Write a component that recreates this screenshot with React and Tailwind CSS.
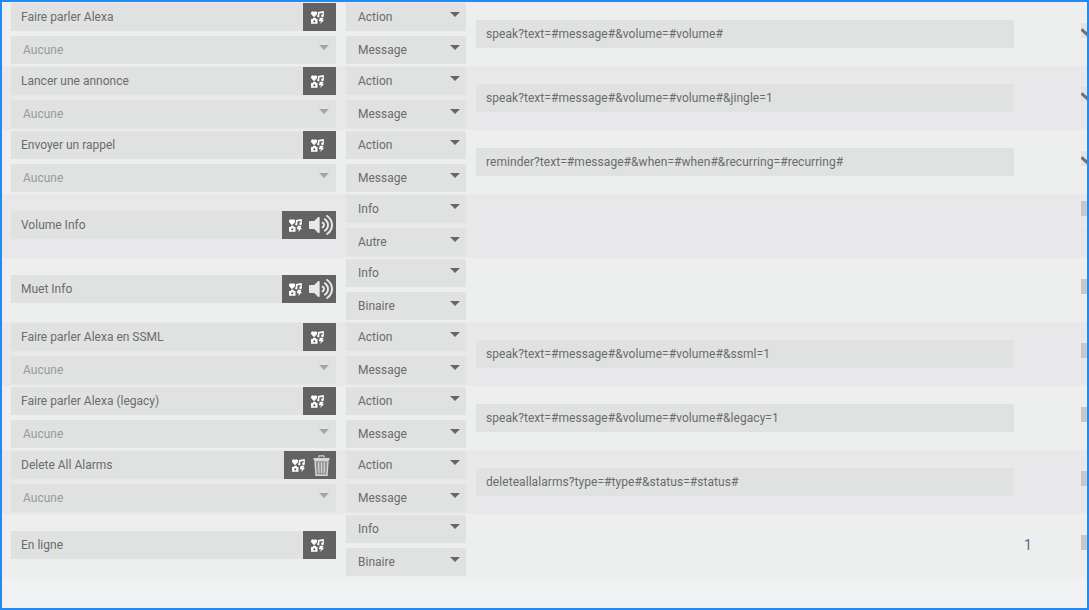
import { FaVolumeUp } from 'react-icons/fa'

const rows = [
  { name: 'Faire parler Alexa', type: 'Action', sub: 'Message', url: 'speak?text=#message#&volume=#volume#', side: 'chevron' },
  { name: 'Lancer une annonce', type: 'Action', sub: 'Message', url: 'speak?text=#message#&volume=#volume#&jingle=1', side: 'chevron' },
  { name: 'Envoyer un rappel', type: 'Action', sub: 'Message', url: 'reminder?text=#message#&when=#when#&recurring=#recurring#', side: 'chevron' },
  { name: 'Volume Info', type: 'Info', sub: 'Autre', icon: 'volume', side: 'double' },
  { name: 'Muet Info', type: 'Info', sub: 'Binaire', icon: 'volume' },
  { name: 'Faire parler Alexa en SSML', type: 'Action', sub: 'Message', url: 'speak?text=#message#&volume=#volume#&ssml=1' },
  { name: 'Faire parler Alexa (legacy)', type: 'Action', sub: 'Message', url: 'speak?text=#message#&volume=#volume#&legacy=1' },
  { name: 'Delete All Alarms', type: 'Action', sub: 'Message', url: 'deleteallalarms?type=#type#&status=#status#', icon: 'trash' },
  { name: 'En ligne', type: 'Info', sub: 'Binaire', value: '1' },
]

function TilesIcon() {
  return (
    <svg viewBox="0 0 14 14" className="w-[13px] h-[13px]" fill="#fff">
      <path d="M3.3 6.6 L0.2 3.4 C-0.7 1.2 1.8 -0.8 3.3 1 C4.8 -0.8 7.3 1.2 6.4 3.4 Z" />
      <path d="M7.4 1 L13.8 0 L13.8 5.4 C13.5 6.8 10.8 6.6 11 5 C11.1 4.2 11.8 3.9 12.4 3.9 L12.4 2.2 L9 2.7 L9 5.8 C8.7 7.2 6.4 7 6.6 5.4 C6.7 4.8 7 4.4 7.4 4.3 Z" />
      <path d="M0 8.6 L1.8 8.6 L2.4 7.4 L5 7.4 L5.6 8.6 L7 8.6 L7 13.8 L0 13.8 Z M3.5 9.9 A1.2 1.2 0 1 0 3.51 9.9 Z" fillRule="evenodd" />
      <path d="M9.4 7.4 L13.6 7.4 L12.2 9.6 L14 9.6 L10 14 L10.8 11 L8.4 11 Z" />
    </svg>
  )
}

function TrashIcon() {
  return (
    <svg viewBox="0 0 17 21" className="w-[17px] h-[21px]" fill="none">
      <path d="M5.5 2.5 L6.2 0.8 L10.8 0.8 L11.5 2.5" stroke="#d4d6d8" strokeWidth="1.2" />
      <path d="M0.5 3 L16.5 3 L16.5 5 L0.5 5 Z" fill="#d4d6d8" />
      <path d="M2 5.5 L3 20.2 L14 20.2 L15 5.5 Z" fill="#8f9496" stroke="#d4d6d8" strokeWidth="1.4" />
      <path d="M5.6 7.5 L5.9 18 M8.5 7.5 L8.5 18 M11.4 7.5 L11.1 18" stroke="#d4d6d8" strokeWidth="1.2" />
    </svg>
  )
}

function Select({ label, light }) {
  return (
    <div className={`relative h-[28px] flex items-center bg-[#e0e2e1] pl-[12px] ${light ? 'text-[#9a9a9a]' : 'text-[#6b6b6b]'}`}>
      {label}
      <span className={`absolute top-[9px] w-0 h-0 border-x-[5px] border-x-transparent border-t-[5px] ${light ? 'right-[7px] border-t-[#a3a5a5]' : 'right-[6px] border-t-[#666666]'}`} />
    </div>
  )
}

function NameField({ name, icon }) {
  return (
    <div className="flex h-[28px] bg-[#e0e2e1]">
      <div className="flex-1 pl-[10px] flex items-center text-[#6b6b6b]">{name}</div>
      {!icon && (
        <div className="flex items-center w-[33px] h-full pl-[8px] bg-[#636363]">
          <TilesIcon />
        </div>
      )}
      {icon === 'volume' && (
        <div className="flex items-center w-[54px] h-full pl-[7px] gap-[7px] bg-[#636363]">
          <TilesIcon />
          <FaVolumeUp className="text-[#e6e8ea] text-[24px]" />
        </div>
      )}
      {icon === 'trash' && (
        <div className="flex items-center w-[52px] h-full pl-[8px] gap-[8px] bg-[#636363]">
          <TilesIcon />
          <TrashIcon />
        </div>
      )}
    </div>
  )
}

function SideControl({ side }) {
  if (side === 'chevron') {
    return (
      <div className="mt-[21px] relative h-[15px] bg-[#e0e2e1] overflow-hidden">
        <span className="absolute left-[-1px] top-[8px] w-[10px] h-[3px] rotate-[40deg] bg-[#7a6a5f]" />
      </div>
    )
  }
  if (side === 'double') {
    return (
      <div className="mt-[7px] flex flex-col gap-[12px]">
        <div className="h-[15px] bg-[#c8c8c8]" />
        <div className="h-[28px] bg-[#e6e6e8]" />
      </div>
    )
  }
  return <div className="mt-[21px] h-[15px] bg-[#c8c8c8]" />
}

function Row({ row, index }) {
  const hasAction = row.type === 'Action'
  return (
    <div className={`flex h-[64px] pl-[9px] ${index % 2 === 0 ? 'bg-[#edefee]' : 'bg-[#e8e8ea]'}`}>
      <div className={`w-[325px] h-full flex flex-col justify-center gap-[5px] pt-[1px] ${hasAction ? 'pb-[2px]' : 'pb-[3px]'}`}>
        <NameField name={row.name} icon={row.icon} />
        {hasAction && <Select label="Aucune" light />}
      </div>
      <div className="w-[120px] ml-[10px] pt-[1px] flex flex-col gap-[5px]">
        <Select label={row.type} />
        <Select label={row.sub} />
      </div>
      <div className="w-[538px] ml-[10px] flex items-center">
        {row.url && <div className="w-full h-[28px] pl-[10px] flex items-center tracking-[0.06px] bg-[#e0e2e1] text-[#6b6b6b]">{row.url}</div>}
      </div>
      <div className="w-[67px] flex items-center pl-[10px] pb-[2px] text-[14px] text-[#4a6f94]">{row.value}</div>
      <div className="flex-1 overflow-hidden">
        <SideControl side={row.side} />
      </div>
    </div>
  )
}

export default function App() {
  return (
    <div className="w-[1089px] h-[610px] border-2 border-[#2389f5] bg-[#f0f1f3] overflow-hidden text-[12px] font-['Roboto',sans-serif]">
      {rows.map((row, i) => (
        <Row key={row.name} row={row} index={i} />
      ))}
    </div>
  )
}
